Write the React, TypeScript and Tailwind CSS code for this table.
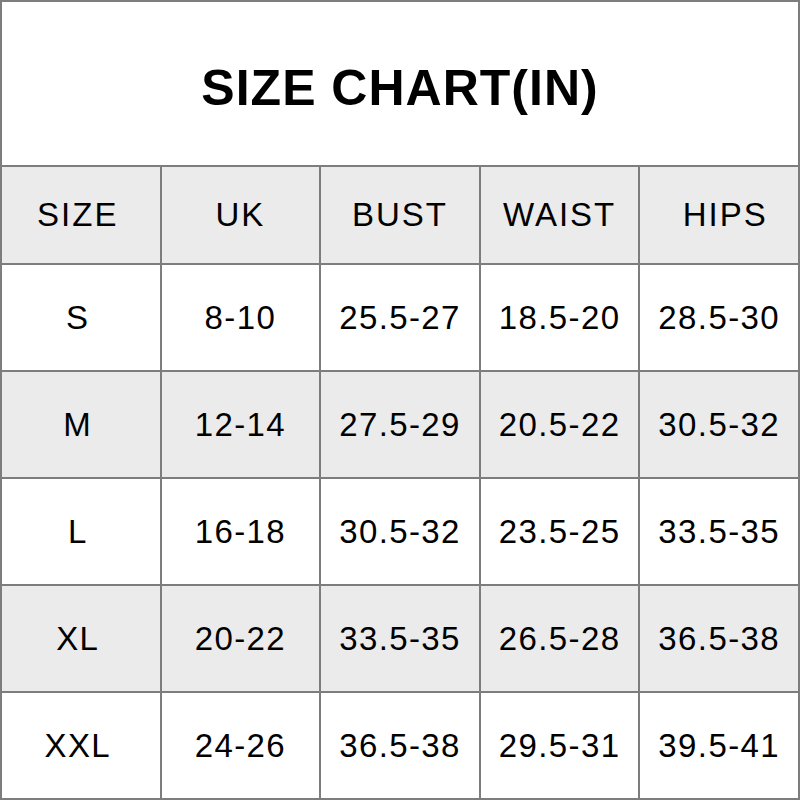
import React from "react";

const header = ["SIZE", "UK", "BUST", "WAIST", "HIPS"];

const rows = [
	["S", "8-10", "25.5-27", "18.5-20", "28.5-30"],
	["M", "12-14", "27.5-29", "20.5-22", "30.5-32"],
	["L", "16-18", "30.5-32", "23.5-25", "33.5-35"],
	["XL", "20-22", "33.5-35", "26.5-28", "36.5-38"],
	["XXL", "24-26", "36.5-38", "29.5-31", "39.5-41"],
];

const App = () => {
	return (
		<div
			className="w-[800px] h-[800px] bg-[#7d7d7d] p-[2px] flex flex-col gap-[2px] text-black"
			style={{ fontFamily: '"Liberation Sans", Arial, sans-serif' }}
		>
			{/* title */}
			<div className="h-[163px] bg-white flex items-center justify-center pt-[8px]">
				<h1 className="text-[50px] font-bold tracking-[1px] leading-none">SIZE CHART(IN)</h1>
			</div>

			{/* table */}
			<div className="flex-1 grid grid-cols-5 grid-rows-[96px_repeat(5,1fr)] gap-[2px]">
				{header.map((h, j) => (
					<div
						key={h}
						className={`bg-[#ebebeb] flex items-center justify-center text-[33px] tracking-[2px] ${j === 0 ? "pr-[6px]" : ""} ${j === 4 ? "pl-[12px]" : ""}`}
					>
						{h}
					</div>
				))}
				{rows.map((row, i) =>
					row.map((cell, j) => (
						<div
							key={`${i}-${j}`}
							className={`${i % 2 === 1 ? "bg-[#ebebeb]" : "bg-white"} flex items-center justify-center text-[33px] tracking-[1.4px] ${j === 0 ? "pr-[6px]" : ""}`}
						>
							{cell}
						</div>
					))
				)}
			</div>
		</div>
	);
};

export default App;
